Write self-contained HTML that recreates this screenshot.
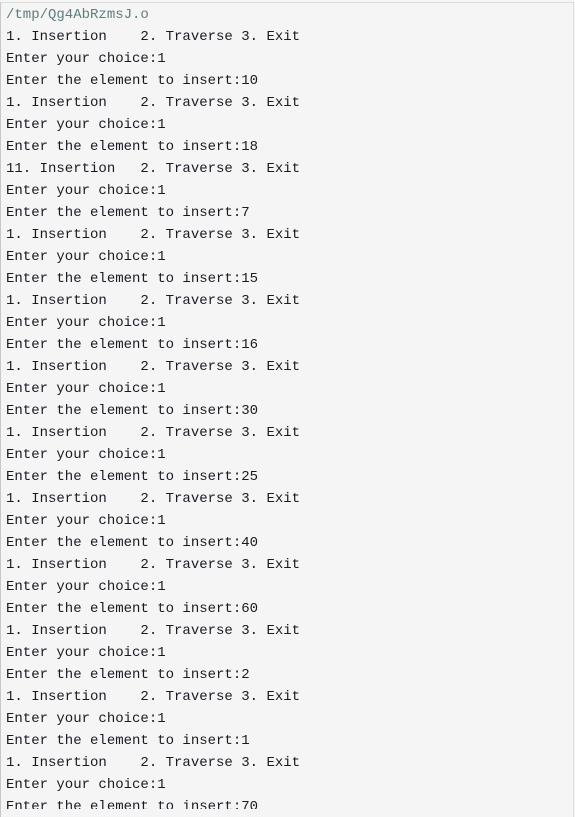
<!DOCTYPE html>
<html><head><meta charset="utf-8"><style>
html,body{margin:0;padding:0;background:#f5f5f5;}
.box{position:absolute;left:0;top:2px;width:574px;height:815px;border-left:1px solid #c8c8c8;border-top:1px solid #dcdcdc;border-right:1px solid #e0e0e0;box-sizing:border-box;background:#f5f5f5;}
pre{position:absolute;left:6px;top:4px;margin:0;height:805px;overflow:hidden;font-family:"Liberation Mono",monospace;font-size:14px;line-height:22px;color:#1a1a24;white-space:pre;}
.p{color:#5e7d7d;}
</style></head><body><div class="box"></div><pre><span class="p">/tmp/Qg4AbRzmsJ.o</span>
1. Insertion    2. Traverse 3. Exit
Enter your choice:1
Enter the element to insert:10
1. Insertion    2. Traverse 3. Exit
Enter your choice:1
Enter the element to insert:18
11. Insertion   2. Traverse 3. Exit
Enter your choice:1
Enter the element to insert:7
1. Insertion    2. Traverse 3. Exit
Enter your choice:1
Enter the element to insert:15
1. Insertion    2. Traverse 3. Exit
Enter your choice:1
Enter the element to insert:16
1. Insertion    2. Traverse 3. Exit
Enter your choice:1
Enter the element to insert:30
1. Insertion    2. Traverse 3. Exit
Enter your choice:1
Enter the element to insert:25
1. Insertion    2. Traverse 3. Exit
Enter your choice:1
Enter the element to insert:40
1. Insertion    2. Traverse 3. Exit
Enter your choice:1
Enter the element to insert:60
1. Insertion    2. Traverse 3. Exit
Enter your choice:1
Enter the element to insert:2
1. Insertion    2. Traverse 3. Exit
Enter your choice:1
Enter the element to insert:1
1. Insertion    2. Traverse 3. Exit
Enter your choice:1
Enter the element to insert:70</pre></body></html>
